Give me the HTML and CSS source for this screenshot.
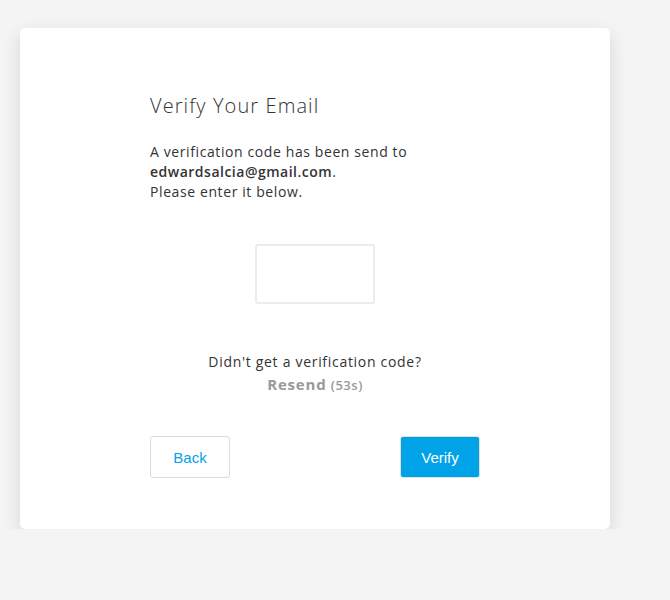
FILE: index.html
```html
<!DOCTYPE html>
<html>
<head>
<meta charset="utf-8">
<link rel="stylesheet" href="styles.css">
</head>
<body>
<div class="card">
  <div class="content">
    <h1 class="title">Verify Your Email</h1>
    <p class="message">A verification code has been send to<br><span class="email">edwardsalcia@gmail.com</span>.<br>Please enter it below.</p>
    <div class="code-row"><input class="code-input" type="text"></div>
    <div class="resend-block">
      <div class="resend-q">Didn't get a verification code?</div>
      <div class="resend"><span class="resend-link">Resend</span> <span class="resend-timer">(53s)</span></div>
    </div>
    <div class="actions">
      <button class="btn btn-back">Back</button>
      <button class="btn btn-verify">Verify</button>
    </div>
  </div>
</div>
</body>
</html>
```
FILE: styles.css
```css
html, body {
  margin: 0;
  padding: 0;
  background: #f4f4f4;
}
body {
  padding: 28px 0 0 20px;
  font-family: "Open Sans", "Liberation Sans", sans-serif;
  color: #333;
}
.card {
  width: 590px;
  height: 501px;
  box-sizing: border-box;
  background: #fff;
  border-radius: 5px;
  box-shadow: 0 6px 18px rgba(0,0,0,0.12);
  padding: 0 130px;
}
.content {
  width: 330px;
  display: flex;
  flex-direction: column;
}
.title {
  margin: 62px 0 0;
  font-size: 20px;
  font-weight: 300;
  line-height: 32px;
  letter-spacing: 1.1px;
  color: #333;
}
.message {
  margin: 20px 0 0;
  font-size: 14px;
  line-height: 20px;
  letter-spacing: 0.6px;
  color: #333;
}
.email {
  font-weight: 600;
  letter-spacing: 0.5px;
}
.code-row {
  display: flex;
  justify-content: center;
  margin-top: 42px;
}
.code-input {
  width: 120px;
  height: 60px;
  box-sizing: border-box;
  border: 2px solid #ececec;
  border-radius: 3px;
  outline: none;
}
.resend-block {
  margin-top: 47px;
  text-align: center;
  font-size: 14px;
  line-height: 22px;
  letter-spacing: 0.7px;
}
.resend {
  color: #999;
}
.resend-link {
  font-weight: 700;
  font-size: 15px;
  letter-spacing: 0.8px;
}
.resend-timer {
  font-weight: 600;
  font-size: 13px;
  letter-spacing: 0.5px;
}
.actions {
  display: flex;
  justify-content: space-between;
  margin-top: 40px;
}
.btn {
  width: 80px;
  height: 42px;
  border-radius: 3px;
  font-family: "Liberation Sans", Arial, sans-serif;
  font-size: 15px;
  cursor: pointer;
}
.btn-back {
  background: #fff;
  border: 1px solid #dcdcdc;
  color: #00a2e8;
}
.btn-verify {
  background: #00a2e8;
  border: 1px solid #e0e0e0;
  color: #fff;
}
```
